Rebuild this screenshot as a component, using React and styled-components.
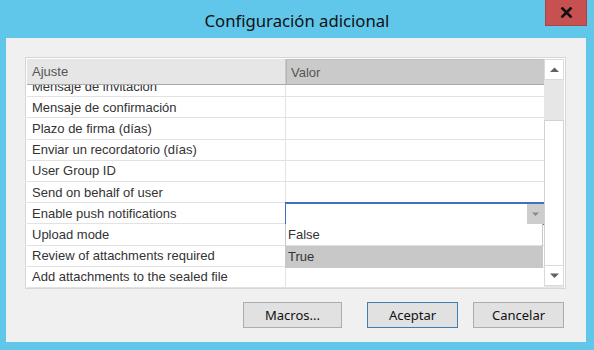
import styled, { createGlobalStyle } from "styled-components";

const rows = [
  "Mensaje de invitación",
  "Mensaje de confirmación",
  "Plazo de firma (días)",
  "Enviar un recordatorio (días)",
  "User Group ID",
  "Send on behalf of user",
  "Enable push notifications",
  "Upload mode",
  "Review of attachments required",
  "Add attachments to the sealed file",
  "Add signature",
];

const Global = createGlobalStyle`
  html, body {
    margin: 0;
    padding: 0;
    background: #60c7ea;
  }
  body {
    font-family: "Liberation Sans", Arial, sans-serif;
  }
`;

const Window = styled.div`
  width: 594px;
  height: 350px;
  display: flex;
  flex-direction: column;
  background: #60c7ea;
`;

const TitleBar = styled.div`
  height: 38px;
  display: grid;
  grid-template-columns: 1fr auto 1fr;
  align-items: start;
`;

const Title = styled.div`
  grid-column: 2;
  margin-top: 9px;
  font-family: "Segoe UI", "Noto Sans", sans-serif;
  font-size: 16.7px;
  color: #111;
`;

const CloseButton = styled.div`
  grid-column: 3;
  justify-self: end;
  margin-right: 7px;
  width: 42px;
  height: 26px;
  box-sizing: border-box;
  background: #c75050;
  border: 1px solid #a94444;
  border-top: none;
  display: grid;
  place-items: center;
`;

const Client = styled.div`
  margin: 0 8px 8px 6px;
  flex: 1;
  background: #f0f0f0;
  padding: 19px 20px 0 19px;
  display: flex;
  flex-direction: column;
`;

const GridBox = styled.div`
  width: 541px;
  height: 232px;
  box-sizing: border-box;
  border: 1px solid #d6d6d6;
  padding: 1px 1px 0 1px;
  background: #fff;
  display: flex;
`;

const Table = styled.div`
  width: 517px;
  display: flex;
  flex-direction: column;
`;

const Header = styled.div`
  height: 26px;
  display: grid;
  grid-template-columns: 259px 1fr;
  box-sizing: border-box;
  border-bottom: 1px solid #a9a9a9;
`;

const HeaderCell = styled.div`
  display: flex;
  align-items: center;
  padding-left: ${(p) => (p.$active ? "4px" : "5px")};
  font-size: 13px;
  color: #555;
  background: ${(p) => (p.$active ? "#cacaca" : "#e6e6e6")};
  border-right: 1px solid ${(p) => (p.$active ? "#cacaca" : "#c9c9c9")};
  border-left: ${(p) => (p.$active ? "1px solid #b5b5b5" : "none")};
  border-top: ${(p) => (p.$active ? "1px solid #bdbdbd" : "none")};
`;

const Viewport = styled.div`
  flex: 1;
  overflow: hidden;
  position: relative;
`;

const Rows = styled.div`
  margin-top: -9px;
`;

const Row = styled.div`
  height: 21.2px;
  display: grid;
  grid-template-columns: 259px 1fr;
  box-sizing: border-box;
  border-bottom: 1px solid #e2e2e2;
`;

const NameCell = styled.div`
  display: flex;
  align-items: center;
  padding-left: 5px;
  border-right: 1px solid #e2e2e2;
  font-size: 13px;
  color: #333;
  white-space: nowrap;
`;

const ValueCell = styled.div`
  display: flex;
`;

const Combo = styled.div`
  flex: 1;
  margin: -1px 0 -2px -1px;
  box-sizing: border-box;
  border: 1px solid #3f6fc0;
  border-top-width: 2px;
  border-right: none;
  background: #fff;
  display: flex;
  justify-content: flex-end;
`;

const ComboArrow = styled.div`
  width: 17px;
  background: #cdcdcd;
  display: grid;
  place-items: center;
`;

const DropList = styled.div`
  position: absolute;
  left: 258px;
  top: 139px;
  width: 258px;
  box-sizing: border-box;
  border: 1px solid #c8c8c8;
  border-top: none;
  background: #fff;
`;

const Option = styled.div`
  height: 21px;
  display: flex;
  align-items: center;
  padding-left: 2px;
  font-size: 13px;
  color: #333;
  background: ${(p) => (p.$selected ? "#c8c8c8" : "#fff")};
  border-top: ${(p) => (p.$selected ? "1px solid #e0e0e0" : "none")};
`;

const ScrollBar = styled.div`
  width: 20px;
  display: flex;
  flex-direction: column;
  background: #e8e8e8;
`;

const ScrollButton = styled.div`
  height: 21px;
  box-sizing: border-box;
  border: 1px solid #dadada;
  background: #fff;
  display: grid;
  place-items: center;
`;

const Track = styled.div`
  height: ${(p) => p.$h}px;
  background: #e6e6e6;
`;

const Thumb = styled.div`
  flex: 1;
  box-sizing: border-box;
  border: 1px solid #d2d2d2;
  border-bottom: none;
  background: #fff;
`;

const ButtonRow = styled.div`
  margin-top: 13px;
  padding-right: 2px;
  display: flex;
  justify-content: flex-end;
`;

const Button = styled.div`
  width: ${(p) => (p.$wide ? "99px" : "91px")};
  height: 26px;
  margin-left: ${(p) => p.$gap}px;
  box-sizing: border-box;
  border: 1px solid ${(p) => (p.$primary ? "#3c7fb1" : "#adadad")};
  background: #e1e1e1;
  display: grid;
  place-items: center;
  font-family: "Segoe UI", "Noto Sans", sans-serif;
  font-size: 13px;
  color: #111;
`;

const Triangle = ({ up, color = "#606060", w = 9 }) => (
  <svg width={w} height={w / 2 + 1} viewBox="0 0 10 5">
    {up ? (
      <polygon points="0,5 10,5 5,0" fill={color} />
    ) : (
      <polygon points="0,0 10,0 5,5" fill={color} />
    )}
  </svg>
);

export default function App() {
  return (
    <>
      <Global />
      <Window>
        <TitleBar>
          <Title>Configuración adicional</Title>
          <CloseButton>
            <svg width="13" height="11" viewBox="0 0 13 11">
              <path d="M1.5 0.5 L11.5 10.5 M11.5 0.5 L1.5 10.5" stroke="#111" strokeWidth="2.6" />
            </svg>
          </CloseButton>
        </TitleBar>
        <Client>
          <GridBox>
            <Table>
              <Header>
                <HeaderCell>Ajuste</HeaderCell>
                <HeaderCell $active>Valor</HeaderCell>
              </Header>
              <Viewport>
                <Rows>
                  {rows.map((name) => (
                    <Row key={name}>
                      <NameCell>{name}</NameCell>
                      <ValueCell>
                        {name === "Enable push notifications" && (
                          <Combo>
                            <ComboArrow>
                              <Triangle color="#8a8a8a" w={7} />
                            </ComboArrow>
                          </Combo>
                        )}
                      </ValueCell>
                    </Row>
                  ))}
                </Rows>
                <DropList>
                  <Option>False</Option>
                  <Option $selected>True</Option>
                </DropList>
              </Viewport>
            </Table>
            <ScrollBar>
              <ScrollButton>
                <Triangle up />
              </ScrollButton>
              <Track $h={40} />
              <Thumb />
              <ScrollButton>
                <Triangle />
              </ScrollButton>
              <Track $h={2} />
            </ScrollBar>
          </GridBox>
          <ButtonRow>
            <Button $wide>Macros...</Button>
            <Button $primary $gap={25}>Aceptar</Button>
            <Button $gap={15}>Cancelar</Button>
          </ButtonRow>
        </Client>
      </Window>
    </>
  );
}
